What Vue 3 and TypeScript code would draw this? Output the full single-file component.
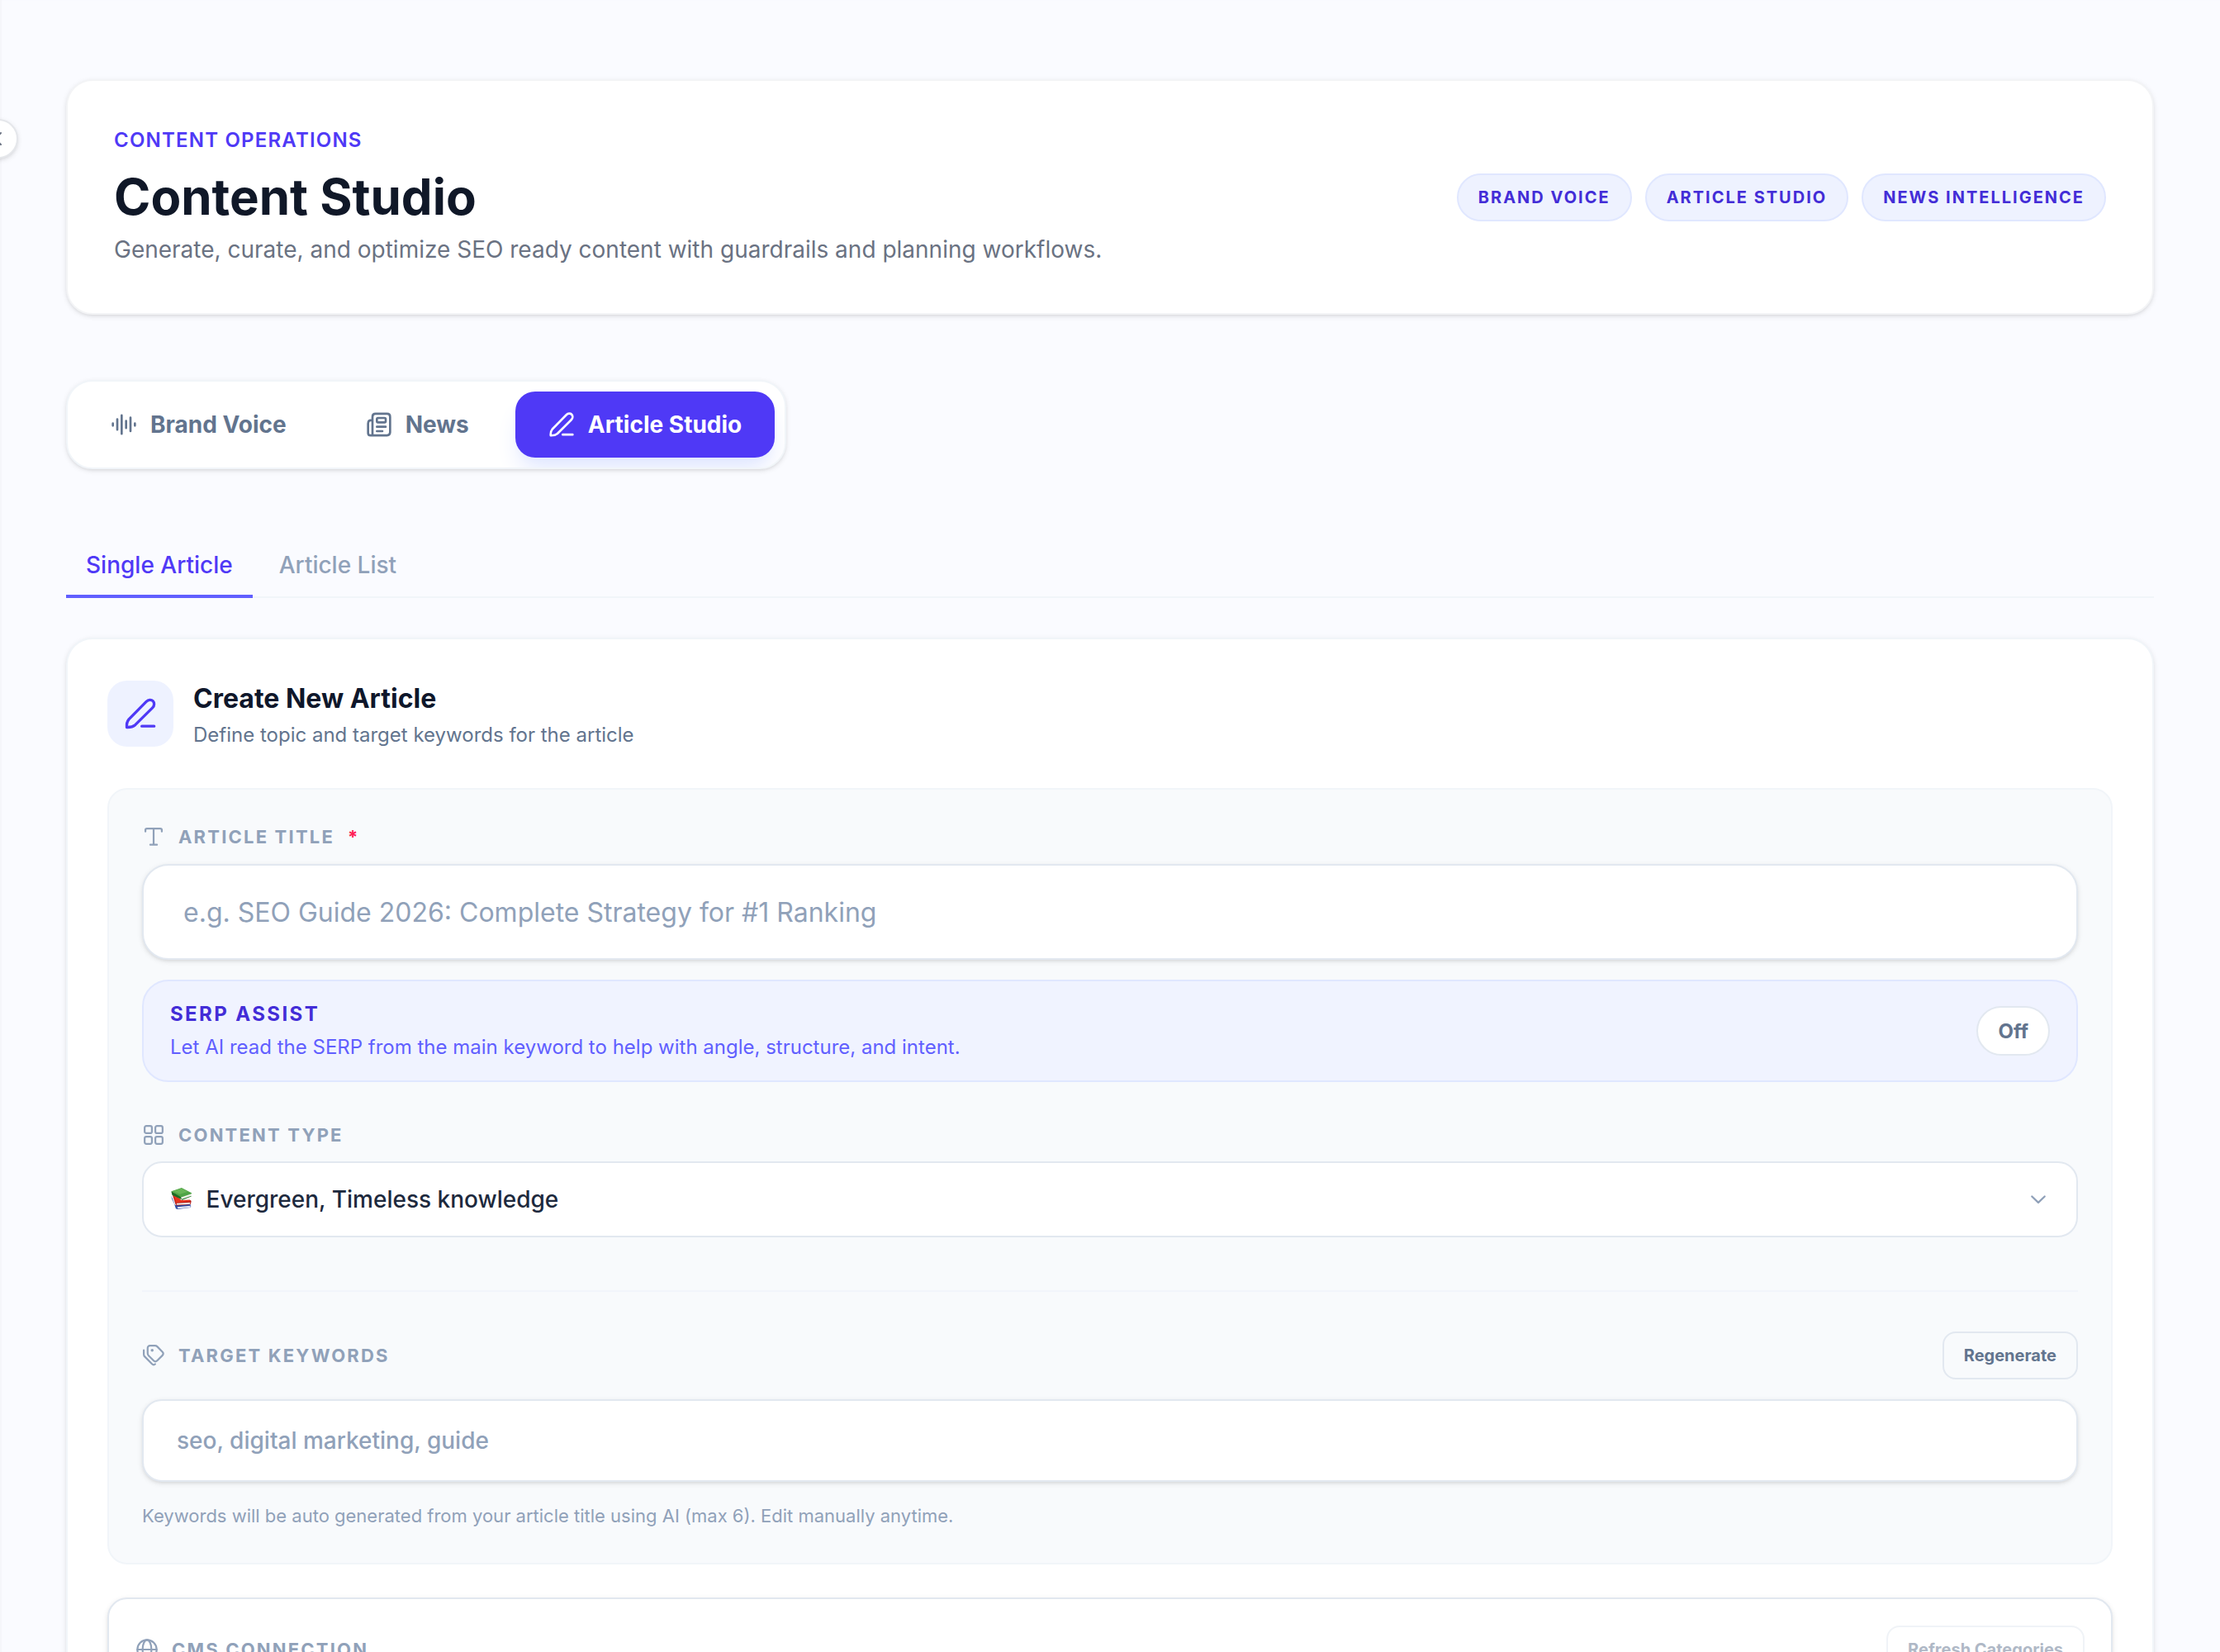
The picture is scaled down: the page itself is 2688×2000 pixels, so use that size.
<script setup lang="ts">
import { ref } from 'vue'

const badges = ['BRAND VOICE', 'ARTICLE STUDIO', 'NEWS INTELLIGENCE']
const subTabs = ['Single Article', 'Article List']
const activeSub = ref('Single Article')
const articleTitle = ref('')
const keywords = ref('')
const serpAssist = ref(false)
const penPath =
  'M2.1 21.9c-.2-2.2.2-4.2 1.5-5.8L16.3 3.2c1.5-1.5 3.6-1.6 4.8-.4s1.2 3.4-.3 4.9L8.2 20.2c-1.7 1.4-3.8 1.8-6.1 1.7zM13 21.1h9'
</script>

<template>
  <div class="page">
    <button class="collapse" aria-label="Collapse sidebar">
      <svg viewBox="0 0 24 24"><path d="M15 5l-7 7 7 7" /></svg>
    </button>

    <header class="hero">
      <div>
        <p class="eyebrow">CONTENT OPERATIONS</p>
        <h1>Content Studio</h1>
        <p class="lead">Generate, curate, and optimize SEO ready content with guardrails and planning workflows.</p>
      </div>
      <div class="badges">
        <span v-for="b in badges" :key="b" class="badge">{{ b }}</span>
      </div>
    </header>

    <nav class="tabs">
      <button class="tab">
        <svg viewBox="0 0 24 24"><path d="M2 11v2M6 7.2v9.4M10 3.6v16.8M14 8.6v6.6M18 5.7v12.3M22 11v2" /></svg>
        Brand Voice
      </button>
      <button class="tab">
        <svg viewBox="0 0 24 24">
          <path d="M6 21.8V5c0-1.9.9-2.8 2.8-2.8h10.4c1.9 0 2.8.9 2.8 2.8v14c0 1.9-.9 2.8-2.8 2.8H4.2C2.8 21.8 2 21 2 19.6V11c0-2 1-3 3-3h1" />
          <path d="M11 6h6c.7 0 1 .3 1 1v2c0 .7-.3 1-1 1h-6c-.7 0-1-.3-1-1V7c0-.7.3-1 1-1zM10 14h8M10 18h5" />
        </svg>
        News
      </button>
      <button class="tab active">
        <svg viewBox="0 0 24 24"><path :d="penPath" /></svg>
        Article Studio
      </button>
    </nav>

    <nav class="subtabs">
      <button
        v-for="t in subTabs"
        :key="t"
        class="subtab"
        :class="{ on: activeSub === t }"
        @click="activeSub = t"
      >{{ t }}</button>
    </nav>

    <section class="card">
      <div class="card-head">
        <div class="card-icon">
          <svg viewBox="0 0 24 24"><path :d="penPath" /></svg>
        </div>
        <div>
          <h2>Create New Article</h2>
          <p class="sub">Define topic and target keywords for the article</p>
        </div>
      </div>

      <div class="panel">
        <label class="label">
          <svg viewBox="0 0 24 24"><path d="M12 3.5v16.8M8.5 20.3h7M3.5 6.6V5c0-1 .6-1.500 1.600-1.500h13.800c1 0 1.600.5 1.600 1.500v1.600" /></svg>
          <span>ARTICLE TITLE</span><span class="req">*</span>
        </label>
        <input v-model="articleTitle" class="title-input" placeholder="e.g. SEO Guide 2026: Complete Strategy for #1 Ranking" />

        <div class="serp">
          <div>
            <p class="serp-title">SERP ASSIST</p>
            <p class="serp-text">Let AI read the SERP from the main keyword to help with angle, structure, and intent.</p>
          </div>
          <button class="toggle" @click="serpAssist = !serpAssist">{{ serpAssist ? 'On' : 'Off' }}</button>
        </div>

        <label class="label type">
          <svg viewBox="0 0 24 24">
            <rect x="2.7" y="2.7" width="7.5" height="7.5" rx="1.7" />
            <rect x="13.8" y="2.7" width="7.5" height="7.5" rx="1.7" />
            <rect x="2.7" y="13.8" width="7.5" height="7.5" rx="1.7" />
            <rect x="13.8" y="13.8" width="7.5" height="7.5" rx="1.7" />
          </svg>
          <span>CONTENT TYPE</span>
        </label>
        <div class="select">
          <svg class="books" viewBox="0 0 72 75">
            <path fill="#3450a8" d="M1 28l6 14 7 18 54 0 2 4-2 5-45 6-6-2-6-18-8-17z" />
            <path fill="#e4e6f2" d="M22 67l46-4v6l-44 4z" />
            <path fill="#2c469c" d="M14 62l54-5v3l-50 6z" />
            <path fill="#b51a16" d="M6 27l8-4 12 22 42-2 3 3-2 12-48 4-5-4z" />
            <path fill="#ece9e4" d="M19 54l48-3v6l-46 3z" />
            <path fill="#e8341f" d="M8 24l18 10 10 9 30-1 2 5-50 5z" />
            <path fill="#1d6b25" d="M1 12l3 13 29 14 5 2 1-10z" />
            <path fill="#f1f1ea" d="M35 32l36-10-1 7-33 12z" />
            <path fill="#4fa446" d="M1 12L37 0l35 18v3L36 33z" />
            <path fill="#68b557" d="M6 12L37 2l22 12-28 8z" />
            <path fill="#2d7d2f" d="M37 40l34-12v2L38 43z" />
          </svg>
          <span>Evergreen, Timeless knowledge</span>
          <svg class="chevron" viewBox="0 0 24 24"><path d="M5.4 9l6.600 6.300L18.600 9" /></svg>
        </div>

        <hr class="rule" />

        <div class="row">
          <label class="label">
            <svg viewBox="0 0 24 24">
              <path d="M8.2 1.9h5.2c1 0 1.8.3 2.5 1l5.3 5.4c1.1 1.1 1.1 2.5 0 3.6l-5.5 5.5c-1.1 1.1-2.6 1.1-3.7 0L6.8 12.2c-.7-.7-1-1.5-1-2.5V4.3c0-1.5.9-2.4 2.4-2.4z" />
              <path d="M1.800 6.600v4.100c0 1 .3 1.800 1 2.500l7.500 7.600c1 1 2.300 1.100 3.300.2" />
              <circle class="dot" cx="10.5" cy="6.6" r="1.5" />
            </svg>
            <span>TARGET KEYWORDS</span>
          </label>
          <button class="small-btn">Regenerate</button>
        </div>
        <input v-model="keywords" class="kw-input" placeholder="seo, digital marketing, guide" />
        <p class="hint">Keywords will be auto generated from your article title using AI (max 6). Edit manually anytime.</p>
      </div>

      <div class="cms">
        <label class="label">
          <svg viewBox="0 0 24 24">
            <circle cx="12" cy="12" r="10" />
            <ellipse cx="12" cy="12" rx="4.6" ry="10" />
            <path d="M2 12h20" />
          </svg>
          <span>CMS CONNECTION</span>
        </label>
        <button class="small-btn" disabled>Refresh Categories</button>
      </div>
    </section>
  </div>
</template>

<style>
html,
body {
  margin: 0;
  overflow: hidden;
  background: #fafbff;
}
</style>

<style scoped>
* {
  box-sizing: border-box;
}
.page {
  position: relative;
  height: 2000px;
  overflow: hidden;
  padding: 96px 80px 0;
  background: #fafbff;
  box-shadow: inset 2px 0 1px #f5f6fa;
  font-family: Inter, 'Liberation Sans', sans-serif;
  color: #0f172b;
}
p,
h1,
h2 {
  margin: 0;
}
button,
input {
  font-family: inherit;
  margin: 0;
}
button {
  border: 0;
  background: none;
  padding: 0;
}
svg {
  display: block;
  flex: none;
  fill: none;
  stroke: currentColor;
  stroke-width: 2;
  stroke-linecap: round;
  stroke-linejoin: round;
}
.collapse {
  position: absolute;
  left: -26px;
  top: 144px;
  width: 48px;
  height: 48px;
  border: 2px solid #e5e7eb;
  border-radius: 50%;
  background: #fff;
  color: #6a7282;
  display: flex;
  align-items: center;
  justify-content: center;
  box-shadow: 0 2px 6px rgba(0, 0, 0, 0.1), 0 2px 4px -2px rgba(0, 0, 0, 0.1);
}
.collapse svg {
  width: 24px;
  height: 24px;
}
.hero {
  height: 285px;
  border: 2px solid #f3f4f6;
  border-radius: 32px;
  background: #fff;
  padding: 56px 56px 55px;
  display: flex;
  justify-content: space-between;
  align-items: flex-start;
  box-shadow: 0 2px 6px rgba(0, 0, 0, 0.1), 0 2px 4px -2px rgba(0, 0, 0, 0.1);
}
.eyebrow {
  font-size: 24px;
  line-height: 32px;
  font-weight: 600;
  letter-spacing: 0.05em;
  color: #4f39f6;
}
h1 {
  margin-top: 16px;
  font-size: 60px;
  line-height: 72px;
  font-weight: 700;
  color: #101828;
}
.lead {
  margin-top: 8px;
  font-size: 28px;
  line-height: 40px;
  color: #6a7282;
}
.badges {
  display: flex;
  gap: 16px;
  margin-top: 56px;
}
.badge {
  height: 58px;
  padding: 12px 24px;
  border: 2px solid #e0e7ff;
  border-radius: 29px;
  background: #eef2ff;
  color: #432dd7;
  font-size: 20px;
  line-height: 30px;
  font-weight: 700;
  letter-spacing: 0.1em;
}
.tabs {
  width: fit-content;
  height: 108px;
  margin-top: 79px;
  padding: 12px;
  border: 2px solid #f1f5f9;
  border-radius: 32px;
  background: #fff;
  display: flex;
  gap: 16px;
  overflow: hidden;
  box-shadow: 0 2px 6px rgba(0, 0, 0, 0.1), 0 2px 4px -2px rgba(0, 0, 0, 0.1);
}
.tab {
  display: flex;
  align-items: center;
  gap: 16px;
  padding: 0 40px;
  border-radius: 24px;
  font-size: 28px;
  font-weight: 700;
  color: #62748e;
}
.tab svg {
  width: 32px;
  height: 32px;
}
.tab.active {
  background: #4f39f6;
  color: #fff;
  box-shadow: 0 20px 30px -6px #e0e7ff, 0 8px 12px -8px #e0e7ff;
}
.subtabs {
  margin-top: 80px;
  height: 76px;
  border-bottom: 2px solid #f1f5f9;
  display: flex;
  gap: 8px;
}
.subtab {
  height: 76px;
  padding: 0 24px;
  border-bottom: 4px solid transparent;
  font-size: 28px;
  font-weight: 500;
  color: #90a1b9;
}
.subtab.on {
  border-color: #615fff;
  color: #4f39f6;
}
.card {
  margin-top: 48px;
  height: 1400px;
  border: 2px solid #f1f5f9;
  border-radius: 32px;
  background: #fff;
  padding: 48px;
  box-shadow: 0 2px 6px rgba(0, 0, 0, 0.1), 0 2px 4px -2px rgba(0, 0, 0, 0.1);
}
.card-head {
  height: 84px;
  display: flex;
  align-items: center;
  gap: 24px;
}
.card-icon {
  width: 80px;
  height: 80px;
  border-radius: 24px;
  background: #eef2ff;
  color: #4f39f6;
  display: flex;
  align-items: center;
  justify-content: center;
}
.card-icon svg {
  width: 40px;
  height: 40px;
}
h2 {
  font-size: 32px;
  line-height: 48px;
  font-weight: 700;
}
.sub {
  margin-top: 4px;
  font-size: 24px;
  line-height: 32px;
  color: #62748e;
}
.panel {
  margin-top: 48px;
  height: 940px;
  border: 2px solid #f1f5f9;
  border-radius: 24px;
  background: #f8fafc;
  padding: 40px;
}
.label {
  display: flex;
  align-items: center;
  gap: 16px;
  height: 34px;
  font-size: 22px;
  font-weight: 700;
  letter-spacing: 0.1em;
  color: #90a1b9;
}
.label svg {
  width: 28px;
  height: 28px;
  stroke-width: 1.9;
}
.label svg .dot {
  fill: currentColor;
  stroke: none;
}
.req {
  color: #ff2056;
}
.title-input,
.kw-input {
  display: block;
  width: 100%;
  border: 2px solid #e2e8f0;
  background: #fff;
  color: #0f172b;
  box-shadow: 0 2px 6px rgba(0, 0, 0, 0.1), 0 2px 4px -2px rgba(0, 0, 0, 0.1);
}
.title-input {
  margin-top: 16px;
  height: 116px;
  border-radius: 32px;
  padding: 0 48px;
  font-size: 32px;
}
.kw-input {
  margin-top: 24px;
  height: 100px;
  border-radius: 24px;
  padding: 0 40px;
  font-size: 28px;
  font-weight: 500;
}
input::placeholder {
  color: #90a1b9;
  opacity: 1;
}
.serp {
  margin-top: 24px;
  height: 124px;
  border: 2px solid #e0e7ff;
  border-radius: 32px;
  background: #f0f3ff;
  padding: 0 32px;
  display: flex;
  align-items: center;
  justify-content: space-between;
}
.serp-title {
  font-size: 24px;
  line-height: 32px;
  font-weight: 700;
  letter-spacing: 0.1em;
  color: #432dd7;
}
.serp-text {
  margin-top: 8px;
  font-size: 24px;
  line-height: 32px;
  color: #615fff;
}
.toggle {
  height: 60px;
  padding: 0 24px;
  border: 2px solid #e2e8f0;
  border-radius: 30px;
  background: #fff;
  color: #62748e;
  font-size: 24px;
  font-weight: 700;
}
.type {
  margin-top: 47px;
}
.select {
  margin-top: 15px;
  height: 92px;
  border: 2px solid #e2e8f0;
  border-radius: 24px;
  background: #fff;
  padding: 0 32px;
  display: flex;
  align-items: center;
  font-size: 28px;
  font-weight: 500;
  color: #1d293d;
}
.books {
  width: 25px;
  height: 26px;
  margin: 0 17.5px 2px 1px;
  stroke: none;
}
.chevron {
  width: 28px;
  height: 28px;
  margin-left: auto;
  color: #90a1b9;
}
.rule {
  margin: 64px 0 0;
  border: 0;
  height: 2px;
  background: #f2f5fb;
}
.row {
  margin-top: 48px;
  height: 58px;
  display: flex;
  align-items: center;
  justify-content: space-between;
}
.small-btn {
  height: 58px;
  padding: 0 24px;
  border: 2px solid #e2e8f0;
  border-radius: 16px;
  color: #62748e;
  font-size: 20px;
  font-weight: 700;
}
.small-btn:disabled {
  opacity: 0.5;
}
.hint {
  margin-top: 24px;
  font-size: 22px;
  line-height: 34px;
  color: #90a1b9;
}
.cms {
  margin-top: 40px;
  height: 300px;
  border: 2px solid #e2e8f0;
  border-radius: 24px;
  background: #fff;
  padding: 32px;
  display: flex;
  align-items: flex-start;
  justify-content: space-between;
  box-shadow: 0 2px 6px rgba(0, 0, 0, 0.1), 0 2px 4px -2px rgba(0, 0, 0, 0.1);
}
.cms .label {
  height: 58px;
}
</style>
